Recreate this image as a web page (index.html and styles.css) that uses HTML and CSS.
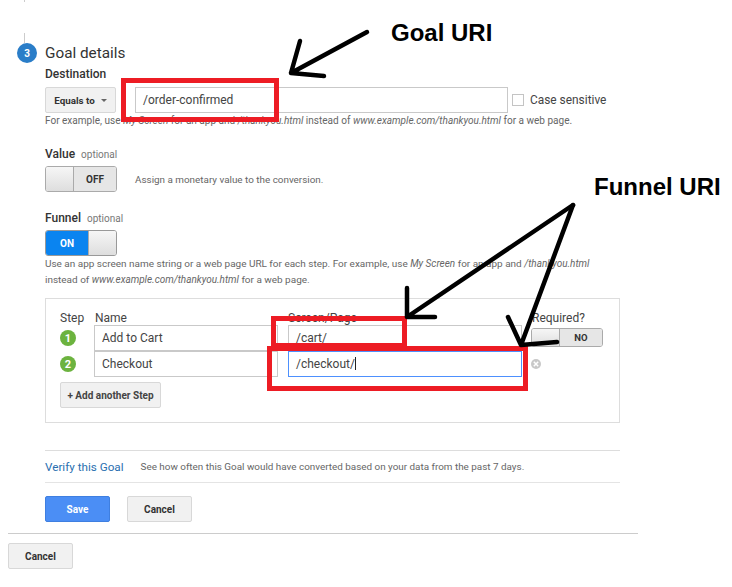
FILE: index.html
```html
<!DOCTYPE html>
<html lang="en">
<head>
<meta charset="utf-8">
<title>Goal details</title>
<link rel="stylesheet" href="styles.css">
</head>
<body>
<div class="page">
  <div class="stem stem-top"></div>
  <div class="stem stem-mid"></div>
  <header class="heading">
    <span class="badge">3</span>
    <h2>Goal details</h2>
  </header>
  <main class="form">
    <div class="label dest-label">Destination</div>
    <div class="dest-row">
      <button class="btn select">Equals to <span class="caret"></span></button>
      <div class="input dest-input">/order-confirmed</div>
      <span class="checkbox"></span>
      <span class="case">Case sensitive</span>
    </div>
    <p class="help one">For example, use <i>My Screen</i> for an app and <i>/thankyou.html</i> instead of <i>www.example.com/thankyou.html</i> for a web page.</p>

    <div class="label value-label">Value <span class="opt">optional</span></div>
    <div class="value-row">
      <div class="toggle off"><span class="knob"></span><span class="state">OFF</span></div>
      <span class="help-inline">Assign a monetary value to the conversion.</span>
    </div>

    <div class="label funnel-label">Funnel <span class="opt">optional</span></div>
    <div class="toggle on"><span class="state">ON</span><span class="knob"></span></div>
    <p class="help two">Use an app screen name string or a web page URL for each step. For example, use <i>My Screen</i> for an app and <i>/thankyou.html</i><br>instead of <i>www.example.com/thankyou.html</i> for a web page.</p>

    <section class="steps">
      <div class="steps-grid">
        <span class="th">Step</span><span class="th th-name">Name</span><span class="th th-page">Screen/Page</span><span class="th th-req">Required?</span>
        <span class="num">1</span>
        <div class="input cell">Add to Cart</div>
        <div class="input cell page-cell">/cart/</div>
        <div class="toggle off small"><span class="knob"></span><span class="state">NO</span></div>
        <span class="num">2</span>
        <div class="input cell">Checkout</div>
        <div class="input cell page-cell focus">/checkout/<span class="cursor"></span></div>
        <svg class="remove" width="12" height="12" viewBox="0 0 12 12"><circle cx="6" cy="6" r="5" fill="#c8c8c8"/><path d="M3.8 3.8l4.4 4.4M8.2 3.8l-4.4 4.4" stroke="#fff" stroke-width="1.5"/></svg>
      </div>
      <button class="btn add">+ Add another Step</button>
    </section>

    <div class="verify">
      <span class="verify-link">Verify this Goal</span>
      <span class="verify-text">See how often this Goal would have converted based on your data from the past 7 days.</span>
    </div>
    <div class="actions">
      <button class="btn primary">Save</button>
      <button class="btn cancel">Cancel</button>
    </div>
  </main>
  <footer class="footer">
    <button class="btn cancel">Cancel</button>
  </footer>
</div>

<svg class="marks" width="732" height="587" viewBox="0 0 732 587" fill="none">
  <g stroke="#ed1c24" stroke-width="5">
    <rect x="123.5" y="80.5" width="153" height="39"/>
    <rect x="273.5" y="318.5" width="131" height="27"/>
    <rect x="269.5" y="348.5" width="256" height="40"/>
  </g>
  <g stroke="#000" stroke-width="4.5" stroke-linecap="round" stroke-linejoin="round">
    <path d="M367 32L291 73M300 41L291 73L324 76"/>
    <path d="M573 205L407 317M407 288L407 317L435 317"/>
    <path d="M573 205L521 345M508 317L521 345L557 342"/>
  </g>
</svg>
<div class="note note-goal">Goal URI</div>
<div class="note note-funnel">Funnel URI</div>
</body>
</html>
```
FILE: styles.css
```css
* { box-sizing: border-box; }
html, body { margin: 0; padding: 0; background: #fff; }
body { width: 732px; height: 587px; overflow: hidden; position: relative; font-family: Roboto, "Liberation Sans", sans-serif; color: #333; }
.stem { width: 1px; background: #ccc; margin-left: 24px; }
.stem-top { height: 2px; }
.stem-mid { height: 10px; margin-top: 31px; }
.heading { display: flex; align-items: center; height: 20px; padding-left: 17px; }
.badge { width: 20px; height: 20px; border-radius: 50%; background: #2a7dc8; color: #fff; font-size: 10px; font-weight: 700; display: flex; align-items: center; justify-content: center; }
.heading h2 { margin: 0 0 0 8px; font-size: 15.3px; font-weight: 400; color: #333; line-height: 20px; }
.form { padding-left: 45px; width: 620px; }
.label { font-size: 12px; font-weight: 500; color: #333; line-height: 14px; }
.dest-label { margin-top: 4px; }
.opt { font-size: 10px; font-weight: 400; color: #777; margin-left: 3px; }
.dest-row { display: flex; align-items: center; margin-top: 6px; }
.btn { font-family: Roboto, "Liberation Sans", sans-serif; font-size: 10px; font-weight: 700; color: #333; background: #f1f1f1; border: 1px solid #d8d8d8; border-radius: 2px; height: 26px; padding: 0; display: inline-flex; align-items: center; justify-content: center; }
.select { width: 71px; flex: none; font-size: 9.8px; }
.caret { width: 0; height: 0; border: 3px solid transparent; border-top: 3px solid #666; border-bottom: 0; margin-left: 6px; }
.input { height: 26px; border: 1px solid #c9c9c9; background: #fff; font-size: 12px; color: #444; line-height: 24px; padding-left: 7px; }
.dest-input { width: 373px; margin-left: 19px; flex: none; }
.checkbox { width: 12px; height: 12px; border: 1px solid #c4c4c4; margin-left: 4px; flex: none; }
.case { font-size: 11.9px; color: #444; margin-left: 6px; }
.help { margin: 0; font-size: 10.04px; color: #666; line-height: 16px; white-space: nowrap; }
.value-label { margin-top: 18px; }
.value-row { display: flex; align-items: center; margin-top: 4px; }
.help-inline { font-size: 9.9px; color: #666; margin-left: 18px; }
.toggle { width: 72px; height: 26px; display: flex; border: 1px solid #aaa; border-radius: 3px; overflow: hidden; flex: none; font-size: 10px; font-weight: 700; }
.knob { width: 28px; background: linear-gradient(#f6f6f6, #dedede); flex: none; }
.state { flex: 1; display: flex; align-items: center; justify-content: center; }
.off .knob { border-right: 1px solid #aaa; }
.off .state { background: #e6e6e6; color: #333; }
.on .state { background: #0a84f0; color: #fff; }
.on .knob { border-left: 1px solid #aaa; }
.funnel-label { margin-top: 19px; }
.on { margin-top: 4px; border-color: #999; }
.help.two { margin-top: 0; font-size: 9.97px; }
.steps { width: 575px; height: 125px; margin-top: 10px; border: 1px solid #ddd; padding: 12px 0 0 14px; }
.steps-grid { display: grid; grid-template-columns: 34px 194px 243px 72px; grid-template-rows: 14px 26px 26px; }
.th { font-size: 12px; color: #444; line-height: 14px; }
.th-name { padding-left: 1px; }
.th-req { padding-left: 1px; }
.num { width: 16px; height: 16px; border-radius: 50%; background: #6cb33f; color: #fff; font-size: 11px; font-weight: 700; display: flex; align-items: center; justify-content: center; align-self: center; }
.cell { width: 184px; }
.page-cell { width: 234px; }
.focus { border-color: #4d90fe; }
.cursor { display: inline-block; width: 1px; height: 13px; background: #222; vertical-align: -2px; }
.small { width: 72px; height: 19px; align-self: center; margin-top: -1px; font-size: 9.5px; }
.remove { align-self: center; margin-left: -1px; margin-top: -1px; }
.add { width: 101px; margin-top: 5px; color: #444; }
.verify { display: flex; align-items: center; height: 33px; width: 575px; margin-top: 27px; border-top: 1px solid #ddd; border-bottom: 1px solid #e4e4e4; }
.verify-link { font-size: 11.7px; color: #2a6fb0; }
.verify-text { font-size: 9.9px; color: #666; margin-left: 17px; }
.actions { display: flex; gap: 17px; margin-top: 13px; }
.actions .btn, .footer .btn { width: 65px; }
.primary { background: #4b8ef5; border-color: #3f7fe0; color: #fff; }
.footer { margin: 11px 0 0 8px; width: 630px; border-top: 1px solid #ccc; padding-top: 9px; }
.marks { position: absolute; left: 0; top: 0; }
.note { position: absolute; font-family: "Liberation Sans", Arial, sans-serif; font-size: 24px; font-weight: 700; color: #000; line-height: 28px; white-space: nowrap; }
.note-goal { left: 391px; top: 19px; }
.note-funnel { left: 594px; top: 173px; }
```
